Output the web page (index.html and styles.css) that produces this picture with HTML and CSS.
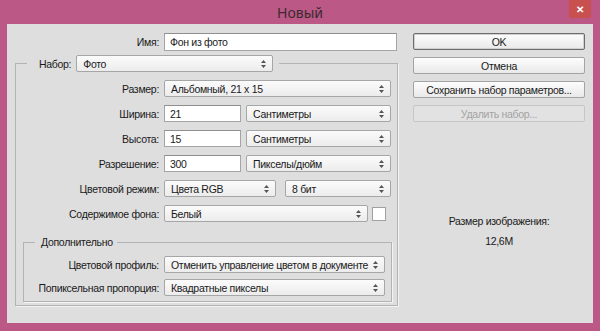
FILE: index.html
```html
<!DOCTYPE html>
<html lang="ru">
<head>
<meta charset="utf-8">
<title>Новый</title>
<link rel="stylesheet" href="styles.css">
</head>
<body>
<div class="window">
  <div class="titlebar">
    <span class="title">Новый</span>
    <div class="close">✕</div>
  </div>
  <div class="client">
    <div class="left">
      <div class="name-row">
        <span class="lbl lbl-name">Имя:</span>
        <div class="input w-name">Фон из фото</div>
      </div>
      <fieldset class="group outer">
        <legend class="legend-preset">
          <span>Набор:</span>
          <div class="select w-preset"><span>Фото</span><svg class="arr" width="5" height="8" viewBox="0 0 5 8"><path d="M2.5 0L5 3H0z M2.5 8L0 5h5z"/></svg></div>
        </legend>
        <div class="frow">
          <span class="lbl">Размер:</span>
          <div class="select w-size"><span>Альбомный, 21 x 15</span><svg class="arr" width="5" height="8" viewBox="0 0 5 8"><path d="M2.5 0L5 3H0z M2.5 8L0 5h5z"/></svg></div>
        </div>
        <div class="frow">
          <span class="lbl">Ширина:</span>
          <div class="input w-num">21</div>
          <div class="select w-unit"><span>Сантиметры</span><svg class="arr" width="5" height="8" viewBox="0 0 5 8"><path d="M2.5 0L5 3H0z M2.5 8L0 5h5z"/></svg></div>
        </div>
        <div class="frow">
          <span class="lbl">Высота:</span>
          <div class="input w-num">15</div>
          <div class="select w-unit"><span>Сантиметры</span><svg class="arr" width="5" height="8" viewBox="0 0 5 8"><path d="M2.5 0L5 3H0z M2.5 8L0 5h5z"/></svg></div>
        </div>
        <div class="frow">
          <span class="lbl">Разрешение:</span>
          <div class="input w-num">300</div>
          <div class="select w-unit"><span>Пикселы/дюйм</span><svg class="arr" width="5" height="8" viewBox="0 0 5 8"><path d="M2.5 0L5 3H0z M2.5 8L0 5h5z"/></svg></div>
        </div>
        <div class="frow">
          <span class="lbl">Цветовой режим:</span>
          <div class="select w-mode"><span>Цвета RGB</span><svg class="arr" width="5" height="8" viewBox="0 0 5 8"><path d="M2.5 0L5 3H0z M2.5 8L0 5h5z"/></svg></div>
          <div class="select w-bits"><span>8 бит</span><svg class="arr" width="5" height="8" viewBox="0 0 5 8"><path d="M2.5 0L5 3H0z M2.5 8L0 5h5z"/></svg></div>
        </div>
        <div class="frow frow-bg">
          <span class="lbl">Содержимое фона:</span>
          <div class="select w-bg"><span>Белый</span><svg class="arr" width="5" height="8" viewBox="0 0 5 8"><path d="M2.5 0L5 3H0z M2.5 8L0 5h5z"/></svg></div>
          <div class="swatch"></div>
        </div>
        <fieldset class="group inner">
          <legend class="legend-adv">Дополнительно</legend>
          <div class="frow irow">
            <span class="lbl">Цветовой профиль:</span>
            <div class="select w-prof"><span>Отменить управление цветом в документе</span><svg class="arr" width="5" height="8" viewBox="0 0 5 8"><path d="M2.5 0L5 3H0z M2.5 8L0 5h5z"/></svg></div>
          </div>
          <div class="frow irow">
            <span class="lbl">Попиксельная пропорция:</span>
            <div class="select w-prof"><span>Квадратные пикселы</span><svg class="arr" width="5" height="8" viewBox="0 0 5 8"><path d="M2.5 0L5 3H0z M2.5 8L0 5h5z"/></svg></div>
          </div>
        </fieldset>
      </fieldset>
    </div>
    <div class="right">
      <div class="btn btn-default">OK</div>
      <div class="btn">Отмена</div>
      <div class="btn">Сохранить набор параметров...</div>
      <div class="btn btn-disabled">Удалить набор...</div>
      <div class="info">
        <div class="info-label">Размер изображения:</div>
        <div class="info-value">12,6M</div>
      </div>
    </div>
  </div>
</div>
</body>
</html>
```

FILE: styles.css
```css
* { box-sizing: border-box; }

body {
  margin: 0;
  font-family: "Liberation Sans", Arial, sans-serif;
  font-size: 10.5px;
  letter-spacing: -0.3px;
  color: #1a1a1a;
}

.window {
  position: relative;
  width: 600px;
  height: 331px;
  background: #bc5885;
  display: flex;
  flex-direction: column;
}

.titlebar {
  height: 24px;
  flex: none;
  display: flex;
  align-items: center;
  justify-content: center;
}

.title {
  font-family: "Noto Sans", "Open Sans", sans-serif;
  font-size: 14px;
  letter-spacing: 0;
  color: #3a2a31;
  margin-top: 1px;
}

.close {
  position: absolute;
  top: 0;
  right: 9px;
  width: 22px;
  height: 18px;
  background: #c8504f;
  color: #fff;
  font-size: 10px;
  font-weight: bold;
  display: flex;
  align-items: center;
  justify-content: center;
}

.client {
  flex: 1;
  margin: 0 7px 8px 7px;
  background: #dedede;
  padding: 9px 8px 0 8px;
  display: flex;
  gap: 15px;
}

.left {
  width: 383px;
  flex: none;
}

.name-row {
  display: flex;
  align-items: center;
  height: 18px;
  margin-bottom: 4px;
}

.lbl {
  text-align: right;
  white-space: nowrap;
  margin-right: 5px;
  flex: none;
}

.lbl-name { width: 144px; }

.input {
  height: 100%;
  background: #fff;
  border: 1px solid #a5a5a5;
  border-top-color: #8e8e8e;
  padding-left: 5px;
  display: flex;
  align-items: center;
  white-space: nowrap;
  flex: none;
}

.select {
  height: 17px;
  background: linear-gradient(#fbfbfb, #ececec);
  border: 1px solid #a6a6a6;
  border-radius: 2px;
  padding: 0 6px 0 6px;
  display: flex;
  align-items: center;
  justify-content: space-between;
  white-space: nowrap;
  flex: none;
}

.arr { fill: #555; flex: none; }

.w-name { width: 233px; }
.w-preset { width: 197px; margin-left: 5px; }
.w-size { width: 227px; }
.w-num { width: 77px; margin-right: 5px; }
.w-unit { width: 145px; }
.w-mode { width: 112px; margin-right: 9px; }
.w-bits { width: 106px; }
.w-bg { width: 204px; margin-right: 4px; }
.w-prof { width: 221px; }

.swatch {
  width: 14px;
  height: 14px;
  background: #fff;
  border: 1px solid #a0a0a0;
  flex: none;
}

.group {
  margin: 0;
  min-inline-size: 0;
  border: 1px solid #b3b3b3;
  box-shadow: 1px 1px 0 #f3f3f3;
}

.outer {
  width: 383px;
  padding: 8px 0 0 0;
}

.legend-preset {
  display: flex;
  align-items: center;
  margin-left: 11px;
  padding: 0 6px 0 12px;
  height: 17px;
}

.frow {
  display: flex;
  align-items: center;
  height: 17px;
  margin-bottom: 8px;
}

.outer > .frow > .lbl { width: 143px; }

.frow-bg {
  margin-top: 5px;
  margin-bottom: 13px;
}

.inner {
  width: 369px;
  margin: 0 0 3px 7px;
  padding: 7px 0 5px 0;
}

.legend-adv {
  margin-left: 11px;
  padding: 0 4px 0 6px;
  line-height: 14px;
}

.irow { margin-bottom: 6px; }
.irow:last-child { margin-bottom: 0; }
.irow > .lbl { width: 135px; }

.right {
  width: 172px;
  flex: none;
  display: flex;
  flex-direction: column;
}

.btn {
  height: 17px;
  margin-bottom: 7px;
  background: linear-gradient(#fdfdfd, #e9e9e9);
  border: 1px solid #a3a3a3;
  border-radius: 2px;
  display: flex;
  align-items: center;
  justify-content: center;
  white-space: nowrap;
}

.btn-default {
  border-color: #6c6c6c;
  box-shadow: inset 0 0 0 1px #d0d0d0;
}

.btn-disabled {
  color: #a3a3a3;
  background: #e2e2e2;
  border-color: #c6c6c6;
}

.info {
  margin-top: 85px;
  text-align: center;
  line-height: 14px;
}

.info-value { margin-top: 6px; }
```
